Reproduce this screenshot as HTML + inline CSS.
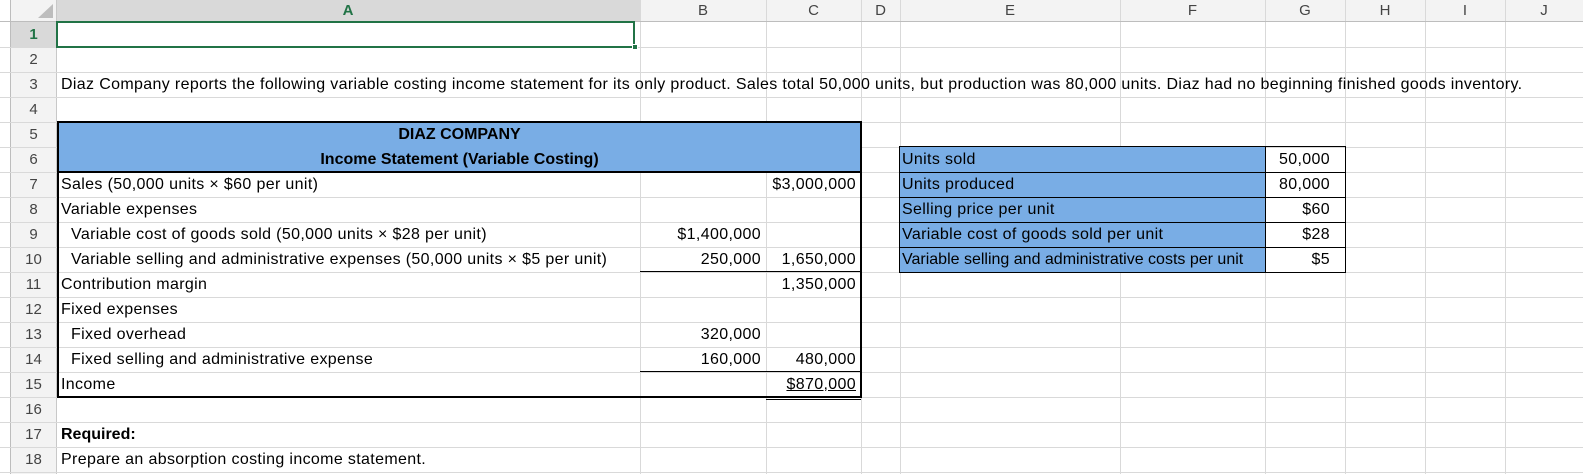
<!DOCTYPE html>
<html><head><meta charset="utf-8"><style>
*{margin:0;padding:0;box-sizing:border-box}
body{width:1583px;height:474px;overflow:hidden;background:#fff;font-family:"Liberation Sans",Arial,sans-serif;font-size:16px;letter-spacing:0.35px;color:#000;position:relative}
.a{position:absolute}
.vl{position:absolute;top:0;width:1px;height:474px;background:#d9d9d9}
.hl{position:absolute;left:0;width:1583px;height:1px;background:#d9d9d9}
.ch{position:absolute;top:0;height:21px;line-height:21px;text-align:center;color:#444;font-size:15px;letter-spacing:0}
.rh{position:absolute;left:11px;width:45px;height:25px;line-height:25px;text-align:center;color:#444;font-size:15px;letter-spacing:0}
.t{position:absolute;height:25px;line-height:25px;white-space:nowrap}
.r{text-align:right}
</style></head><body>
<div class="a" style="left:0;top:0;width:1583px;height:21px;background:#f3f3f3"></div>
<div class="a" style="left:0;top:0;width:56px;height:474px;background:#f3f3f3"></div>
<div class="a" style="left:0;top:0;width:10px;height:474px;background:#fff"></div>
<div class="a" style="left:10px;top:0;width:1px;height:474px;background:#bdbdbd"></div>
<div class="a" style="left:56px;top:0;width:584px;height:21px;background:#d9d9d9"></div>
<div class="a" style="left:11px;top:22px;width:45px;height:25px;background:#d9d9d9"></div>
<svg class="a" style="left:36px;top:3px" width="18" height="16"><polygon points="17,1 17,15 2,15" fill="#bdbdbd"/></svg>
<div class="vl" style="left:56px;background:#c8c8c8"></div>
<div class="vl" style="left:640px"></div><div class="vl" style="left:766px"></div>
<div class="vl" style="left:861px"></div><div class="vl" style="left:900px"></div>
<div class="vl" style="left:1120px"></div><div class="vl" style="left:1265px"></div>
<div class="vl" style="left:1345px"></div><div class="vl" style="left:1425px"></div>
<div class="vl" style="left:1505px"></div>
<div class="hl" style="top:21px;background:#bdbdbd"></div>
<div class="hl" style="top:47px"></div><div class="hl" style="top:72px"></div>
<div class="hl" style="top:97px"></div><div class="hl" style="top:122px"></div>
<div class="hl" style="top:147px"></div><div class="hl" style="top:172px"></div>
<div class="hl" style="top:197px"></div><div class="hl" style="top:222px"></div>
<div class="hl" style="top:247px"></div><div class="hl" style="top:272px"></div>
<div class="hl" style="top:297px"></div><div class="hl" style="top:322px"></div>
<div class="hl" style="top:347px"></div><div class="hl" style="top:372px"></div>
<div class="hl" style="top:397px"></div><div class="hl" style="top:422px"></div>
<div class="hl" style="top:447px"></div><div class="hl" style="top:472px"></div>
<div class="ch" style="left:56px;width:584px;color:#217346;font-weight:bold">A</div>
<div class="ch" style="left:640px;width:126px">B</div>
<div class="ch" style="left:766px;width:95px">C</div>
<div class="ch" style="left:861px;width:39px">D</div>
<div class="ch" style="left:900px;width:220px">E</div>
<div class="ch" style="left:1120px;width:145px">F</div>
<div class="ch" style="left:1265px;width:80px">G</div>
<div class="ch" style="left:1345px;width:80px">H</div>
<div class="ch" style="left:1425px;width:80px">I</div>
<div class="ch" style="left:1505px;width:78px">J</div>
<div class="rh" style="top:22px;color:#217346;font-weight:bold">1</div>
<div class="rh" style="top:47px">2</div><div class="rh" style="top:72px">3</div>
<div class="rh" style="top:97px">4</div><div class="rh" style="top:122px">5</div>
<div class="rh" style="top:147px">6</div><div class="rh" style="top:172px">7</div>
<div class="rh" style="top:197px">8</div><div class="rh" style="top:222px">9</div>
<div class="rh" style="top:247px">10</div><div class="rh" style="top:272px">11</div>
<div class="rh" style="top:297px">12</div><div class="rh" style="top:322px">13</div>
<div class="rh" style="top:347px">14</div><div class="rh" style="top:372px">15</div>
<div class="rh" style="top:397px">16</div><div class="rh" style="top:422px">17</div>
<div class="rh" style="top:447px">18</div>
<div class="a" style="left:58px;top:123px;width:802px;height:49px;background:#79ade5"></div>
<div class="a" style="left:900px;top:147px;width:365px;height:125px;background:#79ade5"></div>
<div class="a" style="left:57px;top:121px;width:805px;height:277px;border:2px solid #000"></div>
<div class="a" style="left:57px;top:171px;width:805px;height:2px;background:#000"></div>
<div class="a" style="left:640px;top:271px;width:221px;height:1px;background:#000"></div>
<div class="a" style="left:640px;top:371px;width:221px;height:1px;background:#000"></div>
<div class="a" style="left:766px;top:399px;width:95px;height:1px;background:#000"></div>
<div class="a" style="left:899px;top:146px;width:447px;height:127px;border:1px solid #000"></div>
<div class="a" style="left:1265px;top:147px;width:1px;height:125px;background:#000"></div>
<div class="a" style="left:899px;top:172px;width:447px;height:1px;background:#000"></div>
<div class="a" style="left:899px;top:197px;width:447px;height:1px;background:#000"></div>
<div class="a" style="left:899px;top:222px;width:447px;height:1px;background:#000"></div>
<div class="a" style="left:899px;top:247px;width:447px;height:1px;background:#000"></div>
<div class="a" style="left:56px;top:21px;width:579px;height:27px;border:2px solid #217346"></div>
<div class="a" style="left:632px;top:44px;width:6px;height:6px;background:#217346;border:1px solid #fff"></div>
<div class="t" style="left:61px;top:72px">Diaz Company reports the following variable costing income statement for its only product. Sales total 50,000 units, but production was 80,000 units. Diaz had no beginning finished goods inventory.</div>
<div class="t" style="left:58px;width:803px;top:122px;text-align:center;font-weight:bold;letter-spacing:0">DIAZ COMPANY</div>
<div class="t" style="left:58px;width:803px;top:147px;text-align:center;font-weight:bold;letter-spacing:0">Income Statement (Variable Costing)</div>
<div class="t" style="left:61px;top:172px">Sales (50,000 units × $60 per unit)</div>
<div class="t r" style="left:766px;width:90px;top:172px">$3,000,000</div>
<div class="t" style="left:61px;top:197px">Variable expenses</div>
<div class="t" style="left:71px;top:222px">Variable cost of goods sold (50,000 units × $28 per unit)</div>
<div class="t r" style="left:640px;width:121px;top:222px">$1,400,000</div>
<div class="t" style="left:71px;top:247px">Variable selling and administrative expenses (50,000 units × $5 per unit)</div>
<div class="t r" style="left:640px;width:121px;top:247px">250,000</div>
<div class="t r" style="left:766px;width:90px;top:247px">1,650,000</div>
<div class="t" style="left:61px;top:272px">Contribution margin</div>
<div class="t r" style="left:766px;width:90px;top:272px">1,350,000</div>
<div class="t" style="left:61px;top:297px">Fixed expenses</div>
<div class="t" style="left:71px;top:322px">Fixed overhead</div>
<div class="t r" style="left:640px;width:121px;top:322px">320,000</div>
<div class="t" style="left:71px;top:347px">Fixed selling and administrative expense</div>
<div class="t r" style="left:640px;width:121px;top:347px">160,000</div>
<div class="t r" style="left:766px;width:90px;top:347px">480,000</div>
<div class="t" style="left:61px;top:372px">Income</div>
<div class="t r" style="left:766px;width:90px;top:372px;text-decoration:underline">$870,000</div>
<div class="t" style="left:61px;top:422px;font-weight:bold;letter-spacing:0">Required:</div>
<div class="t" style="left:61px;top:447px">Prepare an absorption costing income statement.</div>
<div class="t" style="left:902px;top:147px">Units sold</div>
<div class="t" style="left:902px;top:172px">Units produced</div>
<div class="t" style="left:902px;top:197px">Selling price per unit</div>
<div class="t" style="left:902px;top:222px">Variable cost of goods sold per unit</div>
<div class="t" style="left:902px;top:247px;letter-spacing:0">Variable selling and administrative costs per unit</div>
<div class="t r" style="left:1266px;width:64px;top:147px">50,000</div>
<div class="t r" style="left:1266px;width:64px;top:172px">80,000</div>
<div class="t r" style="left:1266px;width:64px;top:197px">$60</div>
<div class="t r" style="left:1266px;width:64px;top:222px">$28</div>
<div class="t r" style="left:1266px;width:64px;top:247px">$5</div>
</body></html>
